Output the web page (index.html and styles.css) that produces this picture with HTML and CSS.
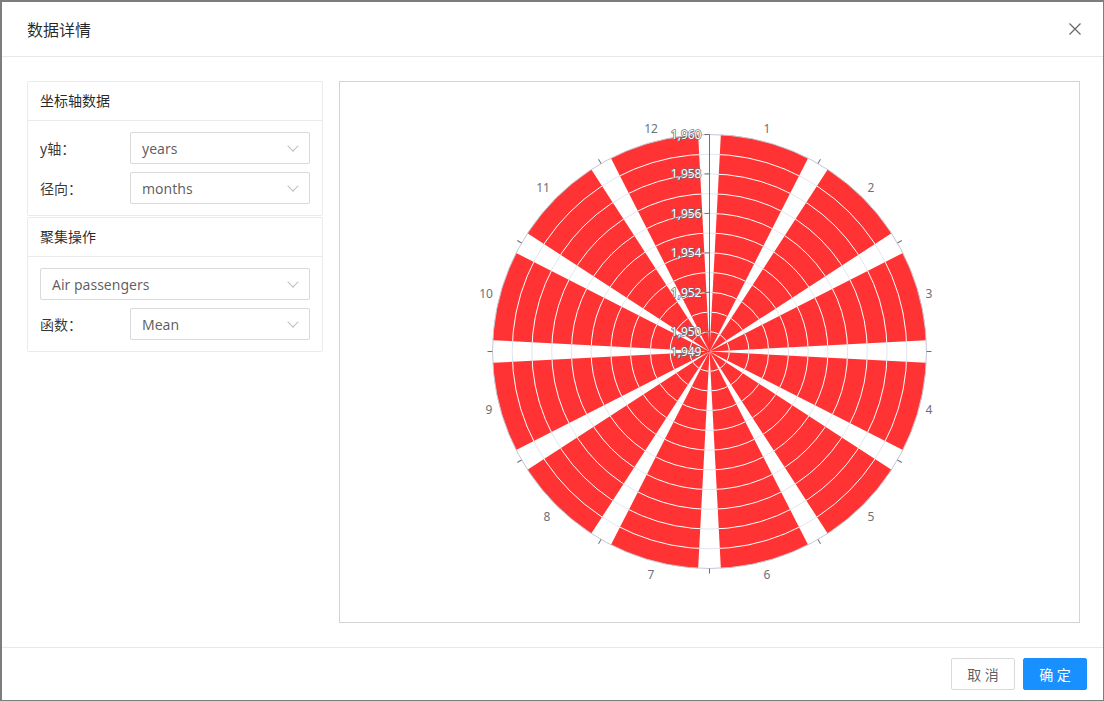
FILE: index.html
```html
<!DOCTYPE html>
<html lang="zh">
<head>
    <meta charset="UTF-8">
    <meta name="viewport" content="width=device-width, initial-scale=1.0">
    <title>数据详情</title>
    <link rel="stylesheet" href="styles.css">
</head>
<body>
    <div class="modal">
        <div class="modal-header">
            <span class="modal-title">数据详情</span>
            <span class="modal-close">
                <svg width="14" height="14" viewBox="0 0 14 14"><path d="M1.5 1.5 L12.5 12.5 M12.5 1.5 L1.5 12.5" stroke="#666" stroke-width="1.2" fill="none"/></svg>
            </span>
        </div>

        <div class="modal-body">
            <div class="side">
                <div class="card">
                    <div class="card-head">坐标轴数据</div>
                    <div class="card-body">
                        <div class="field">
                            <label>y轴：</label>
                            <div class="select"><span>years</span><i class="arrow"></i></div>
                        </div>
                        <div class="field">
                            <label>径向：</label>
                            <div class="select"><span>months</span><i class="arrow"></i></div>
                        </div>
                    </div>
                </div>
                <div class="card">
                    <div class="card-head">聚集操作</div>
                    <div class="card-body">
                        <div class="select"><span>Air passengers</span><i class="arrow"></i></div>
                        <div class="field">
                            <label>函数：</label>
                            <div class="select"><span>Mean</span><i class="arrow"></i></div>
                        </div>
                    </div>
                </div>
            </div>

            <div class="chart">
                <svg width="739" height="540" viewBox="-369.5 -269.5 739 540">
                    <defs>
                        <path id="wedge" d="M0 0 L-45.12 -212.26 A217 217 0 0 1 45.12 -212.26 Z"/>
                        <clipPath id="bars">
                            <use href="#wedge" transform="rotate(15)"/>
                            <use href="#wedge" transform="rotate(45)"/>
                            <use href="#wedge" transform="rotate(75)"/>
                            <use href="#wedge" transform="rotate(105)"/>
                            <use href="#wedge" transform="rotate(135)"/>
                            <use href="#wedge" transform="rotate(165)"/>
                            <use href="#wedge" transform="rotate(195)"/>
                            <use href="#wedge" transform="rotate(225)"/>
                            <use href="#wedge" transform="rotate(255)"/>
                            <use href="#wedge" transform="rotate(285)"/>
                            <use href="#wedge" transform="rotate(315)"/>
                            <use href="#wedge" transform="rotate(345)"/>
                        </clipPath>
                    </defs>

                    <!-- split lines -->
                    <g class="split">
                        <circle r="19.73"/><circle r="39.45"/><circle r="59.18"/><circle r="78.9"/>
                        <circle r="98.6"/><circle r="118.4"/><circle r="138.1"/><circle r="157.8"/>
                        <circle r="177.6"/><circle r="197.3"/>
                    </g>

                    <!-- bars -->
                    <g class="bar">
                        <use href="#wedge" transform="rotate(15)"/>
                        <use href="#wedge" transform="rotate(45)"/>
                        <use href="#wedge" transform="rotate(75)"/>
                        <use href="#wedge" transform="rotate(105)"/>
                        <use href="#wedge" transform="rotate(135)"/>
                        <use href="#wedge" transform="rotate(165)"/>
                        <use href="#wedge" transform="rotate(195)"/>
                        <use href="#wedge" transform="rotate(225)"/>
                        <use href="#wedge" transform="rotate(255)"/>
                        <use href="#wedge" transform="rotate(285)"/>
                        <use href="#wedge" transform="rotate(315)"/>
                        <use href="#wedge" transform="rotate(345)"/>
                    </g>
                    <g class="seg" clip-path="url(#bars)">
                        <circle r="19.73"/><circle r="39.45"/><circle r="59.18"/><circle r="78.9"/>
                        <circle r="98.6"/><circle r="118.4"/><circle r="138.1"/><circle r="157.8"/>
                        <circle r="177.6"/><circle r="197.3"/>
                    </g>

                    <!-- angle axis -->
                    <circle class="angle-line" r="217"/>
                    <g class="tick">
                        <line y1="-217" y2="-222" transform="rotate(30)"/>
                        <line y1="-217" y2="-222" transform="rotate(60)"/>
                        <line y1="-217" y2="-222" transform="rotate(90)"/>
                        <line y1="-217" y2="-222" transform="rotate(120)"/>
                        <line y1="-217" y2="-222" transform="rotate(150)"/>
                        <line y1="-217" y2="-222" transform="rotate(180)"/>
                        <line y1="-217" y2="-222" transform="rotate(210)"/>
                        <line y1="-217" y2="-222" transform="rotate(240)"/>
                        <line y1="-217" y2="-222" transform="rotate(270)"/>
                        <line y1="-217" y2="-222" transform="rotate(300)"/>
                        <line y1="-217" y2="-222" transform="rotate(330)"/>
                    </g>
                    <g class="angle-label">
                        <text x="57.5" y="-223.5">1</text>
                        <text x="161.5" y="-164.5">2</text>
                        <text x="219.5" y="-58.5">3</text>
                        <text x="219.5" y="57.5">4</text>
                        <text x="161.5" y="164.5">5</text>
                        <text x="57.5" y="222.5">6</text>
                        <text x="-58.5" y="222.5">7</text>
                        <text x="-162.5" y="164.5">8</text>
                        <text x="-220.5" y="57.5">9</text>
                        <text x="-223.5" y="-58.5">10</text>
                        <text x="-166.5" y="-164.5">11</text>
                        <text x="-58.5" y="-223.5">12</text>
                    </g>

                    <!-- radius axis -->
                    <g class="tick">
                        <line x1="0" y1="0" x2="0" y2="-217"/>
                        <line x1="-5" x2="0" y1="0" y2="0"/>
                        <line x1="-5" x2="0" y1="-19.73" y2="-19.73"/>
                        <line x1="-5" x2="0" y1="-59.18" y2="-59.18"/>
                        <line x1="-5" x2="0" y1="-98.6" y2="-98.6"/>
                        <line x1="-5" x2="0" y1="-138.1" y2="-138.1"/>
                        <line x1="-5" x2="0" y1="-177.6" y2="-177.6"/>
                        <line x1="-5" x2="0" y1="-217" y2="-217"/>
                    </g>
                    <g class="radius-label">
                        <text x="-8" y="0">1,949</text>
                        <text x="-8" y="-19.73">1,950</text>
                        <text x="-8" y="-59.18">1,952</text>
                        <text x="-8" y="-98.6">1,954</text>
                        <text x="-8" y="-138.1">1,956</text>
                        <text x="-8" y="-177.6">1,958</text>
                        <text x="-8" y="-217">1,960</text>
                    </g>
                </svg>
            </div>
        </div>

        <div class="modal-footer">
            <button class="btn">取 消</button>
            <button class="btn btn-primary">确 定</button>
        </div>
    </div>
</body>
</html>
```

FILE: styles.css
```css
html, body {
    margin: 0;
    height: 100%;
}

body {
    font-family: "Noto Sans", "Noto Sans CJK SC", sans-serif;
    font-size: 14px;
    color: rgba(0, 0, 0, 0.65);
    background-color: #ffffff;
}

.modal {
    box-sizing: border-box;
    height: 100%;
    display: flex;
    flex-direction: column;
    border-style: solid;
    border-color: #7d7d7d;
    border-width: 2px 1px 1px 2px;
    background-color: #ffffff;
}

.modal-header {
    height: 54px;
    display: flex;
    align-items: center;
    justify-content: space-between;
    padding: 0 21px 0 25px;
    border-bottom: 1px solid #e8e8e8;
}

.modal-title {
    font-size: 16px;
    color: rgba(0, 0, 0, 0.85);
}

.modal-close {
    display: flex;
    align-items: center;
}

.modal-body {
    flex: 1;
    display: flex;
    gap: 16px;
    padding: 24px 23px 24px 25px;
}

.side {
    width: 296px;
    display: flex;
    flex-direction: column;
    gap: 1px;
}

.card {
    border: 1px solid #ebebeb;
    border-radius: 2px;
}

.card-head {
    height: 38px;
    line-height: 38px;
    padding: 0 12px;
    color: rgba(0, 0, 0, 0.85);
    border-bottom: 1px solid #ebebeb;
}

.card-body {
    padding: 11px 12px 11px 12px;
    display: flex;
    flex-direction: column;
    gap: 8px;
}

.field {
    display: flex;
    align-items: center;
}

.field label {
    width: 90px;
    color: rgba(0, 0, 0, 0.8);
}

.select {
    box-sizing: border-box;
    height: 32px;
    display: flex;
    align-items: center;
    justify-content: space-between;
    padding: 0 12px 0 11px;
    border: 1px solid #d9d9d9;
    border-radius: 2px;
    color: rgba(0, 0, 0, 0.65);
}

.field .select {
    flex: 1;
}

.arrow {
    width: 7px;
    height: 7px;
    border-right: 1px solid #bfbfbf;
    border-bottom: 1px solid #bfbfbf;
    transform: rotate(45deg);
    margin-top: -5px;
}

.chart {
    flex: 1;
    border: 1px solid #d3d3d3;
    display: flex;
}

.chart svg {
    display: block;
}

.split circle {
    fill: none;
    stroke: #e0e6f1;
    stroke-width: 1;
}

.bar use {
    fill: #ff3333;
}

.seg circle {
    fill: none;
    stroke: #ffffff;
    stroke-width: 1;
}

.angle-line {
    fill: none;
    stroke: #c3c8d3;
    stroke-width: 1;
}

.tick line {
    stroke: #6e7079;
    stroke-width: 1;
}

.angle-label text {
    font-family: "Noto Sans", sans-serif;
    font-size: 12px;
    fill: #6e7079;
    text-anchor: middle;
    dominant-baseline: central;
}

.radius-label text {
    font-family: "Noto Sans", sans-serif;
    font-size: 12px;
    fill: #ffffff;
    stroke: #6e7079;
    stroke-width: 1.4px;
    paint-order: stroke;
    text-anchor: end;
    dominant-baseline: central;
}

.modal-footer {
    display: flex;
    justify-content: flex-end;
    gap: 8px;
    padding: 10px 16px 10px 16px;
    border-top: 1px solid #e8e8e8;
}

.btn {
    width: 64px;
    height: 32px;
    font-family: "Noto Sans", "Noto Sans CJK SC", sans-serif;
    font-size: 14px;
    color: rgba(0, 0, 0, 0.65);
    background-color: #ffffff;
    border: 1px solid #d9d9d9;
    border-radius: 2px;
    cursor: pointer;
}

.btn-primary {
    color: #ffffff;
    background-color: #1890ff;
    border-color: #1890ff;
}
```
